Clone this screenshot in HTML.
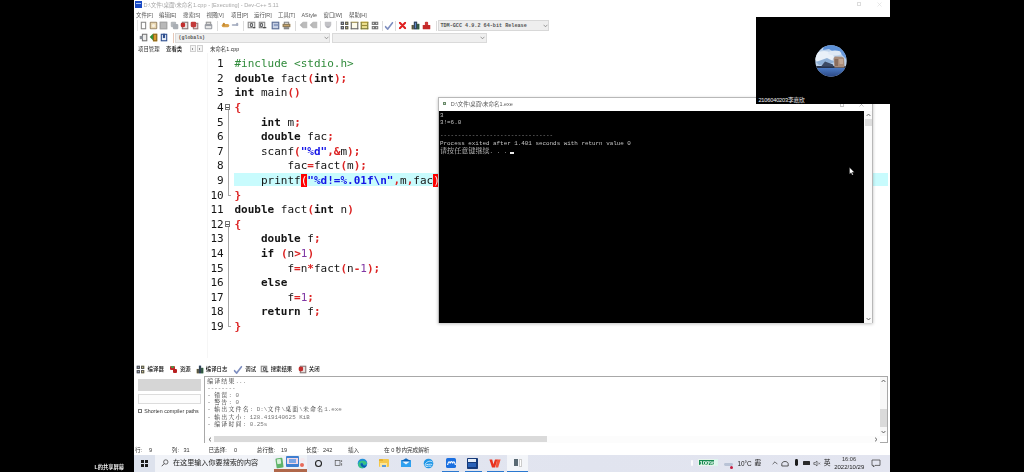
<!DOCTYPE html>
<html lang="zh-CN">
<head>
<meta charset="utf-8">
<title>Dev-C++ screen share</title>
<style>
*{margin:0;padding:0;box-sizing:border-box}
html,body{width:1024px;height:472px;overflow:hidden;background:#000}
body{position:relative;font-family:"Liberation Sans","Noto Sans CJK SC",sans-serif;color:#000}
.a{position:absolute;white-space:nowrap}
#screen{left:134px;top:0;width:756px;height:472px;background:#fff;overflow:hidden}
/* everything inside #screen is positioned in page coordinates via the wrapper below */
#w{left:-134px;top:0;width:1024px;height:472px;filter:blur(0.4px)}
.ui{font-size:5.4px;line-height:8px;color:#444}
.title{font-size:5.6px;line-height:8px;color:#a8a8a8}
.code{color:#141414;font-family:"DejaVu Sans Mono","Liberation Mono",monospace;font-size:11px;line-height:14.6px;letter-spacing:0;white-space:pre}
.ln{left:199.2px;width:24.5px;text-align:right;height:14.6px}
.cl{left:234.5px;height:14.6px}
.k{font-weight:bold}
.s{color:#dc2424;font-weight:bold}
.p{color:#2f8a3a}
.n{color:#8038a4}
.q{color:#1414e6;font-weight:bold}
.mono{font-family:"Liberation Mono","Noto Sans CJK SC",monospace}
.con{font-family:"Liberation Mono","Noto Sans CJK SC",monospace;font-size:5.9px;line-height:7.1px;color:#c4c4c4}
.cj{font-family:"Noto Serif CJK SC","Noto Sans CJK SC",serif;font-size:7.09px}
.out{font-family:"Noto Serif CJK SC","Noto Sans CJK SC",serif;font-size:5.9px;line-height:7.1px;color:#333;letter-spacing:1.2px}
.ol{font-family:"Liberation Mono",monospace;font-size:5.9px;color:#777;letter-spacing:0}
.br{background:#f00;color:#fff}
.tb{font-size:7.1px;line-height:9px;color:#222}
</style>
</head>
<body>
<div id="screen" class="a"><div id="w" class="a">

<!-- ===== title bar ===== -->
<div class="a" style="left:134.8px;top:1.2px;width:7.2px;height:7.3px;background:#1a4ac4"></div><div class="a" style="left:135.6px;top:2.9px;width:5.6px;height:1.3px;background:#a8c6f4"></div>
<div class="a title" style="left:143.5px;top:0.5px">D:\文件\桌面\未命名1.cpp - [Executing] - Dev-C++ 5.11</div>

<!-- ===== menu bar ===== -->
<div class="a ui" style="left:136px;top:10.6px;color:#555">文件[F]</div>
<div class="a ui" style="left:159px;top:10.6px;color:#555">编辑[E]</div>
<div class="a ui" style="left:183px;top:10.6px;color:#555">搜索[S]</div>
<div class="a ui" style="left:206.5px;top:10.6px;color:#555">视图[V]</div>
<div class="a ui" style="left:231px;top:10.6px;color:#555">项目[P]</div>
<div class="a ui" style="left:254px;top:10.6px;color:#555">运行[R]</div>
<div class="a ui" style="left:278px;top:10.6px;color:#555">工具[T]</div>
<div class="a ui" style="left:301.5px;top:10.6px;color:#555">AStyle</div>
<div class="a ui" style="left:323.5px;top:10.6px;color:#555">窗口[W]</div>
<div class="a ui" style="left:349px;top:10.6px;color:#555">帮助[H]</div>

<!-- TOOLBARS -->
<!-- ===== toolbars ===== -->
<div class="a" style="left:0;top:0;width:0;height:0;transform-origin:143.7px 25.4px;transform:scale(1.08)"><div class="a" style="left:141.1px;top:21.8px;width:5.0px;height:7.2px;background:#fdfdfd;border:0.8px solid #8a8a8a"></div></div>
<div class="a" style="left:0;top:0;width:0;height:0;transform-origin:153.6px 25.4px;transform:scale(1.08)"><div class="a" style="left:150.2px;top:22.3px;width:6.8px;height:6.4px;background:#e9d7b0;border:0.8px solid #a08c6c;border-radius:1px"></div><div class="a" style="left:152.0px;top:23.8px;width:3.4px;height:3.2px;background:#f7f0e0;border-radius:2px"></div></div>
<div class="a" style="left:0;top:0;width:0;height:0;transform-origin:163.7px 25.4px;transform:scale(1.08)"><div class="a" style="left:160.3px;top:21.8px;width:6.8px;height:7.0px;background:#b9b9b9;border:0.6px solid #a4a4a4"></div></div>
<div class="a" style="left:0;top:0;width:0;height:0;transform-origin:174.2px 25.4px;transform:scale(1.08)"><div class="a" style="left:170.8px;top:21.8px;width:5.0px;height:5.4px;background:#b4b8bc;border-radius:1px"></div><div class="a" style="left:172.6px;top:23.6px;width:5.0px;height:5.4px;background:#a9aeb4;border-radius:1px"></div></div>
<div class="a" style="left:0;top:0;width:0;height:0;transform-origin:184.3px 25.4px;transform:scale(1.08)"><div class="a" style="left:182.3px;top:21.8px;width:5.4px;height:7.2px;background:#e8e2e0;border:0.7px solid #8a7a7a"></div><div class="a" style="left:180.9px;top:23.2px;width:4.2px;height:4.2px;background:#c22d2d;border-radius:1.2px"></div></div>
<div class="a" style="left:0;top:0;width:0;height:0;transform-origin:194.5px 25.4px;transform:scale(1.08)"><div class="a" style="left:193.3px;top:22.8px;width:4.6px;height:6.2px;background:#e4d8d8;border:0.7px solid #9a7a7a"></div><div class="a" style="left:191.1px;top:21.8px;width:4.6px;height:5.6px;background:#c43a3a;border-radius:1.2px"></div></div>
<div class="a" style="left:0;top:0;width:0;height:0;transform-origin:208.6px 25.4px;transform:scale(1.08)"><div class="a" style="left:206.4px;top:21.8px;width:4.4px;height:3.0px;background:#e6e6e6;border:0.6px solid #999"></div><div class="a" style="left:205.2px;top:24.4px;width:6.8px;height:4.4px;background:#9c9fa6;border-radius:1px"></div><div class="a" style="left:206.2px;top:26.4px;width:4.8px;height:1.6px;background:#e8e8e8;"></div></div>
<div class="a" style="left:0;top:0;width:0;height:0;transform-origin:225.8px 25.4px;transform:scale(1.08)"><div class="a" style="left:222.4px;top:24.0px;width:6.8px;height:2.6px;background:#d9a14a;border-radius:1.4px"></div><div class="a" style="left:222.6px;top:22.8px;width:2.6px;height:3.4px;background:#c58a32;border-radius:1px"></div></div>
<div class="a" style="left:0;top:0;width:0;height:0;transform-origin:235.1px 25.4px;transform:scale(1.08)"><div class="a" style="left:231.7px;top:24.2px;width:6.8px;height:2.2px;background:#b5bccb;border-radius:1.4px"></div><div class="a" style="left:235.9px;top:23.0px;width:2.4px;height:3.0px;background:#a5adc0;border-radius:1px"></div></div>
<div class="a" style="left:0;top:0;width:0;height:0;transform-origin:251.8px 25.4px;transform:scale(1.08)"><div class="a" style="left:248.4px;top:21.8px;width:6.4px;height:6.4px;background:#f2f2f2;border:0.7px solid #8a8a8a"></div><div class="a" style="left:250.0px;top:23.4px;width:3.2px;height:3.2px;background:#dfe3ea;border:0.7px solid #666;border-radius:2px"></div><div class="a" style="left:253.0px;top:26.8px;width:2.4px;height:1.6px;background:#444;"></div></div>
<div class="a" style="left:0;top:0;width:0;height:0;transform-origin:262.0px 25.4px;transform:scale(1.08)"><div class="a" style="left:258.6px;top:21.8px;width:6.4px;height:6.4px;background:#f2f2f2;border:0.7px solid #8a8a8a"></div><div class="a" style="left:260.2px;top:23.4px;width:3.2px;height:3.2px;background:#dfe3ea;border:0.7px solid #666;border-radius:2px"></div><div class="a" style="left:263.2px;top:26.8px;width:2.4px;height:1.6px;background:#444;"></div></div>
<div class="a" style="left:0;top:0;width:0;height:0;transform-origin:275.8px 25.4px;transform:scale(1.08)"><div class="a" style="left:272.4px;top:21.8px;width:6.8px;height:7.0px;background:#c9d3e6;border:0.9px solid #5d6f96"></div><div class="a" style="left:274.0px;top:23.8px;width:3.6px;height:2.6px;background:#8fa0c4;"></div></div>
<div class="a" style="left:0;top:0;width:0;height:0;transform-origin:286.7px 25.4px;transform:scale(1.08)"><div class="a" style="left:284.3px;top:21.8px;width:4.8px;height:3.0px;background:#efefef;border:0.6px solid #888"></div><div class="a" style="left:283.3px;top:24.4px;width:6.8px;height:3.0px;background:#c9a36a;border:0.6px solid #8a7a5a"></div><div class="a" style="left:284.3px;top:26.8px;width:4.8px;height:2.2px;background:#ededed;border:0.6px solid #888"></div></div>
<div class="a" style="left:0;top:0;width:0;height:0;transform-origin:303.9px 25.4px;transform:scale(1.08)"><div class="a" style="left:302.5px;top:22.4px;width:4.8px;height:6.0px;background:#bcbcbc;"></div><div class="a" style="left:299.9px;top:22.4px;width:0;height:0;border-right:3px solid #b4b4b4;border-top:3px solid transparent;border-bottom:3px solid transparent"></div></div>
<div class="a" style="left:0;top:0;width:0;height:0;transform-origin:314.0px 25.4px;transform:scale(1.08)"><div class="a" style="left:312.6px;top:22.4px;width:4.8px;height:6.0px;background:#bcbcbc;"></div><div class="a" style="left:310.0px;top:22.4px;width:0;height:0;border-right:3px solid #b4b4b4;border-top:3px solid transparent;border-bottom:3px solid transparent"></div></div>
<div class="a" style="left:0;top:0;width:0;height:0;transform-origin:328.0px 25.4px;transform:scale(1.08)"><div class="a" style="left:324.6px;top:22.2px;width:6.8px;height:4.6px;background:#c2c2c6;border-radius:0 0 2px 2px"></div><div class="a" style="left:326.0px;top:26.4px;width:4.0px;height:1.8px;background:#b4b4ba;border-radius:0 0 2px 2px"></div></div>
<div class="a" style="left:0;top:0;width:0;height:0;transform-origin:344.2px 25.4px;transform:scale(1.08)"><div class="a" style="left:340.8px;top:21.8px;width:3.0px;height:3.3px;background:#a9b8dc;border:0.55px solid #555"></div><div class="a" style="left:344.6px;top:21.8px;width:3.0px;height:3.3px;background:#e6dc8a;border:0.55px solid #555"></div><div class="a" style="left:340.8px;top:25.7px;width:3.0px;height:3.3px;background:#a9b8dc;border:0.55px solid #555"></div><div class="a" style="left:344.6px;top:25.7px;width:3.0px;height:3.3px;background:#e6dc8a;border:0.55px solid #555"></div></div>
<div class="a" style="left:0;top:0;width:0;height:0;transform-origin:354.2px 25.4px;transform:scale(1.08)"><div class="a" style="left:350.8px;top:22.2px;width:6.8px;height:6.4px;background:#fdfae8;border:0.7px solid #666;border-top:1.4px solid #9a8a4a"></div></div>
<div class="a" style="left:0;top:0;width:0;height:0;transform-origin:364.5px 25.4px;transform:scale(1.08)"><div class="a" style="left:361.1px;top:22.2px;width:6.8px;height:6.4px;background:#ece08e;border:0.7px solid #77773a;border-top:1.5px solid #a8922a"></div><div class="a" style="left:362.3px;top:24.8px;width:4.4px;height:1.0px;background:#9a8a3a;"></div></div>
<div class="a" style="left:0;top:0;width:0;height:0;transform-origin:375.0px 25.4px;transform:scale(1.08)"><div class="a" style="left:371.6px;top:21.8px;width:3.0px;height:3.3px;background:#f4f4f4;border:0.6px solid #777"></div><div class="a" style="left:375.4px;top:21.8px;width:3.0px;height:3.3px;background:#f4f4f4;border:0.6px solid #777"></div><div class="a" style="left:371.6px;top:25.7px;width:3.0px;height:3.3px;background:#f4f4f4;border:0.6px solid #777"></div><div class="a" style="left:375.4px;top:25.7px;width:3.0px;height:3.3px;background:#f4f4f4;border:0.6px solid #777"></div></div>
<div class="a" style="left:0;top:0;width:0;height:0;transform-origin:388.7px 25.4px;transform:scale(1.08)"><svg class="a" style="left:384.9px;top:21.6px" width="8" height="8" viewBox="0 0 8 8"><path d="M0.6 4.6 L2.8 6.8 L7.4 0.8" fill="none" stroke="#7f8fc0" stroke-width="1.5" stroke-linecap="round" stroke-linejoin="round"/></svg></div>
<div class="a" style="left:0;top:0;width:0;height:0;transform-origin:402.3px 25.4px;transform:scale(1.08)"><svg class="a" style="left:398.9px;top:22.0px" width="7" height="7" viewBox="0 0 7 7"><path d="M1 1 L6 6 M6 1 L1 6" fill="none" stroke="#e02020" stroke-width="1.9" stroke-linecap="round"/></svg></div>
<div class="a" style="left:0;top:0;width:0;height:0;transform-origin:415.6px 25.4px;transform:scale(1.08)"><div class="a" style="left:412.2px;top:25.2px;width:2.2px;height:3.6px;background:#d4b04a;border:0.5px solid #554"></div><div class="a" style="left:414.4px;top:22.2px;width:2.4px;height:6.6px;background:#5d86c8;border:0.5px solid #345"></div><div class="a" style="left:416.8px;top:24.0px;width:2.2px;height:4.8px;background:#57a85a;border:0.5px solid #354"></div></div>
<div class="a" style="left:0;top:0;width:0;height:0;transform-origin:426.5px 25.4px;transform:scale(1.08)"><div class="a" style="left:423.1px;top:24.8px;width:6.8px;height:4.0px;background:#c42828;border-radius:0.6px"></div><div class="a" style="left:424.9px;top:22.4px;width:3.4px;height:3.0px;background:#cc3a3a;border-radius:1px 1px 0 0"></div></div>
<div class="a" style="left:217.0px;top:20.5px;width:0.6px;height:10.0px;background:#dcdcdc;"></div>
<div class="a" style="left:243.0px;top:20.5px;width:0.6px;height:10.0px;background:#dcdcdc;"></div>
<div class="a" style="left:294.5px;top:20.5px;width:0.6px;height:10.0px;background:#dcdcdc;"></div>
<div class="a" style="left:320.0px;top:20.5px;width:0.6px;height:10.0px;background:#dcdcdc;"></div>
<div class="a" style="left:336.0px;top:20.5px;width:0.6px;height:10.0px;background:#dcdcdc;"></div>
<div class="a" style="left:382.0px;top:20.5px;width:0.6px;height:10.0px;background:#dcdcdc;"></div>
<div class="a" style="left:395.0px;top:20.5px;width:0.6px;height:10.0px;background:#dcdcdc;"></div>
<div class="a" style="left:436.0px;top:20.5px;width:0.6px;height:10.0px;background:#dcdcdc;"></div>
<div class="a" style="left:136.5px;top:20.0px;width:0.5px;height:11.0px;background:#e4e4e4;"></div>
<div class="a" style="left:438.0px;top:20.1px;width:111.3px;height:10.7px;background:#eeeeee;border:0.6px solid #d8d8d8"></div>
<div class="a mono" style="left:440.4px;top:21.9px;font-size:5.15px;line-height:8px;color:#555;font-weight:bold">TDM-GCC 4.9.2 64-bit Release</div>
<svg class="a" style="left:542.6px;top:23.8px" width="5" height="4" viewBox="0 0 5 4"><path d="M0.6 0.8 L2.5 2.8 L4.4 0.8" fill="none" stroke="#777" stroke-width="0.7"/></svg>
<div class="a" style="left:0;top:0;width:0;height:0;transform-origin:143.2px 37.2px;transform:scale(1.08)"><div class="a" style="left:141.8px;top:33.6px;width:4.8px;height:7.2px;background:#ececec;border:0.8px solid #777"></div><div class="a" style="left:139.8px;top:35.8px;width:3.6px;height:2.8px;background:#8a8f96;"></div></div>
<div class="a" style="left:0;top:0;width:0;height:0;transform-origin:153.9px 37.2px;transform:scale(1.08)"><div class="a" style="left:152.9px;top:33.6px;width:4.4px;height:7.2px;background:#d99a2e;border:0.6px solid #8a6a20"></div><div class="a" style="left:149.9px;top:34.2px;width:0;height:0;border-right:3.6px solid #2f8f2f;border-top:3px solid transparent;border-bottom:3px solid transparent"></div></div>
<div class="a" style="left:0;top:0;width:0;height:0;transform-origin:164.0px 37.2px;transform:scale(1.08)"><div class="a" style="left:161.2px;top:33.6px;width:5.6px;height:7.2px;background:#e8eef8;border:1.2px solid #2f4f8f"></div><div class="a" style="left:163.0px;top:34.4px;width:2.0px;height:3.4px;background:#2f4f8f;"></div></div>
<div class="a" style="left:172.6px;top:32.5px;width:0.6px;height:10.0px;background:#e6c8b8;"></div>
<div class="a" style="left:175.0px;top:32.6px;width:155.0px;height:10.6px;background:#efefef;border:0.6px solid #dadada"></div>
<div class="a mono" style="left:178.6px;top:34.2px;font-size:4.9px;line-height:8px;color:#555;font-weight:bold">(globals)</div>
<svg class="a" style="left:324px;top:36.2px" width="5" height="4" viewBox="0 0 5 4"><path d="M0.6 0.8 L2.5 2.8 L4.4 0.8" fill="none" stroke="#777" stroke-width="0.7"/></svg>
<div class="a" style="left:331.6px;top:32.6px;width:155.0px;height:10.6px;background:#efefef;border:0.6px solid #dadada"></div>
<svg class="a" style="left:480px;top:36.2px" width="5" height="4" viewBox="0 0 5 4"><path d="M0.6 0.8 L2.5 2.8 L4.4 0.8" fill="none" stroke="#777" stroke-width="0.7"/></svg>
<div class="a ui" style="left:138.0px;top:44.8px;color:#333">项目管理</div>
<div class="a ui" style="left:166.0px;top:45.4px;color:#111;font-weight:500">查看类</div>
<div class="a" style="left:189.8px;top:45.0px;width:6.4px;height:7.4px;background:#f4f4f4;border:0.5px solid #d0d0d0"></div>
<div class="a" style="left:196.6px;top:45.0px;width:6.4px;height:7.4px;background:#f4f4f4;border:0.5px solid #d0d0d0"></div>
<div class="a" style="left:191.8px;top:47.6px;width:0;height:0;border-right:1.8px solid #333;border-top:1.3px solid transparent;border-bottom:1.3px solid transparent"></div>
<div class="a" style="left:199.2px;top:47.6px;width:0;height:0;border-left:1.8px solid #333;border-top:1.3px solid transparent;border-bottom:1.3px solid transparent"></div>
<div class="a ui" style="left:210.0px;top:44.8px;color:#333">未命名1.cpp</div>

<div class="a" style="left:206.6px;top:53px;width:0.7px;height:305px;background:#f6f6f6"></div>
<!-- EDITOR -->
<!-- ===== editor ===== -->
<div class="a" style="left:234px;top:172.6px;width:654px;height:13.7px;background:#c8fbfd"></div>
<div class="a" style="left:227.5px;top:106.9px;width:0.7px;height:88.0px;background:#a8a8a8"></div><div class="a" style="left:227.5px;top:194.9px;width:3px;height:0.7px;background:#a8a8a8"></div><div class="a" style="left:225.3px;top:104.3px;width:5.1px;height:5.6px;background:#fff;border:0.7px solid #777"></div><div class="a" style="left:226.4px;top:106.8px;width:2.9px;height:0.7px;background:#555"></div>
<div class="a" style="left:227.5px;top:223.7px;width:0.7px;height:102.6px;background:#a8a8a8"></div><div class="a" style="left:227.5px;top:326.3px;width:3px;height:0.7px;background:#a8a8a8"></div><div class="a" style="left:225.3px;top:221.1px;width:5.1px;height:5.6px;background:#fff;border:0.7px solid #777"></div><div class="a" style="left:226.4px;top:223.6px;width:2.9px;height:0.7px;background:#555"></div>
<div class="a code ln" style="top:57.2px">1</div><div class="a code cl" style="top:57.2px"><span class="p">#include &lt;stdio.h&gt;</span></div>
<div class="a code ln" style="top:71.8px">2</div><div class="a code cl" style="top:71.8px"><span class="k">double</span> fact<span class="s">(</span><span class="k">int</span><span class="s">);</span></div>
<div class="a code ln" style="top:86.4px">3</div><div class="a code cl" style="top:86.4px"><span class="k">int</span> main<span class="s">()</span></div>
<div class="a code ln" style="top:101.0px">4</div><div class="a code cl" style="top:101.0px"><span class="s">{</span></div>
<div class="a code ln" style="top:115.6px">5</div><div class="a code cl" style="top:115.6px">    <span class="k">int</span> m<span class="s">;</span></div>
<div class="a code ln" style="top:130.2px">6</div><div class="a code cl" style="top:130.2px">    <span class="k">double</span> fac<span class="s">;</span></div>
<div class="a code ln" style="top:144.8px">7</div><div class="a code cl" style="top:144.8px">    scanf<span class="s">(</span><span class="q">&quot;%d&quot;</span><span class="s">,&amp;</span>m<span class="s">);</span></div>
<div class="a code ln" style="top:159.4px">8</div><div class="a code cl" style="top:159.4px">        fac<span class="s">=</span>fact<span class="s">(</span>m<span class="s">);</span></div>
<div class="a code ln" style="top:174.0px">9</div><div class="a code cl" style="top:174.0px">    printf<span class="br">(</span><span class="q">&quot;%d!=%.01f\n&quot;</span><span class="s">,</span>m<span class="s">,</span>fac<span class="br">)</span></div>
<div class="a code ln" style="top:188.6px">10</div><div class="a code cl" style="top:188.6px"><span class="s">}</span></div>
<div class="a code ln" style="top:203.2px">11</div><div class="a code cl" style="top:203.2px"><span class="k">double</span> fact<span class="s">(</span><span class="k">int</span> n<span class="s">)</span></div>
<div class="a code ln" style="top:217.8px">12</div><div class="a code cl" style="top:217.8px"><span class="s">{</span></div>
<div class="a code ln" style="top:232.4px">13</div><div class="a code cl" style="top:232.4px">    <span class="k">double</span> f<span class="s">;</span></div>
<div class="a code ln" style="top:247.0px">14</div><div class="a code cl" style="top:247.0px">    <span class="k">if</span> <span class="s">(</span>n<span class="s">&gt;</span><span class="n">1</span><span class="s">)</span></div>
<div class="a code ln" style="top:261.6px">15</div><div class="a code cl" style="top:261.6px">        f<span class="s">=</span>n<span class="s">*</span>fact<span class="s">(</span>n<span class="s">-</span><span class="n">1</span><span class="s">);</span></div>
<div class="a code ln" style="top:276.2px">16</div><div class="a code cl" style="top:276.2px">    <span class="k">else</span></div>
<div class="a code ln" style="top:290.8px">17</div><div class="a code cl" style="top:290.8px">        f<span class="s">=</span><span class="n">1</span><span class="s">;</span></div>
<div class="a code ln" style="top:305.4px">18</div><div class="a code cl" style="top:305.4px">    <span class="k">return</span> f<span class="s">;</span></div>
<div class="a code ln" style="top:320.0px">19</div><div class="a code cl" style="top:320.0px"><span class="s">}</span></div>


<!-- CONSOLE -->
<!-- ===== console window ===== -->
<div class="a" style="left:438.4px;top:97.2px;width:434.6px;height:226.0px;background:#fff;border:0.6px solid #b8b8b8;box-shadow:0 1px 3px rgba(0,0,0,0.25)"></div>
<div class="a" style="left:439.0px;top:110.5px;width:425.2px;height:212.2px;background:#000;"></div>
<div class="a" style="left:864.2px;top:110.5px;width:8.0px;height:212.2px;background:#fafafa;"></div>
<div class="a" style="left:864.6px;top:118.8px;width:7.2px;height:7.4px;background:#dedede;"></div>
<svg class="a" style="left:865.6px;top:113.4px" width="5" height="4" viewBox="0 0 5 4"><path d="M0.6 3 L2.5 1 L4.4 3" fill="none" stroke="#555" stroke-width="0.8"/></svg>
<svg class="a" style="left:865.6px;top:317px" width="5" height="4" viewBox="0 0 5 4"><path d="M0.6 1 L2.5 3 L4.4 1" fill="none" stroke="#555" stroke-width="0.8"/></svg>
<div class="a" style="left:442.6px;top:101.6px;width:3.6px;height:3.8px;background:#cfd8d0;border:0.6px solid #6a8a6a"></div>
<div class="a ui" style="left:450.8px;top:99.8px;font-size:5.5px;color:#5a5a5a">D:\文件\桌面\未命名1.exe</div>
<div class="a" style="left:839.6px;top:103.4px;width:4.0px;height:3.6px;background:transparent;border:0.6px solid #c4c4c4"></div>
<svg class="a" style="left:859px;top:102.4px" width="5" height="5" viewBox="0 0 5 5"><path d="M0.5 0.5 L4.5 4.5 M4.5 0.5 L0.5 4.5" stroke="#999" stroke-width="0.6"/></svg>
<div class="a con" style="left:440.0px;top:111.9px;">3</div>
<div class="a con" style="left:440.0px;top:118.5px;">3!=6.0</div>
<div class="a con" style="left:440.0px;top:131.8px;color:#9a9a9a">--------------------------------</div>
<div class="a con" style="left:440.0px;top:139.8px;">Process exited after 1.401 seconds with return value 0</div>
<div class="a con" style="left:440.0px;top:146.9px;"><span class="cj">请按任意键继续</span>. . . </div>
<div class="a" style="left:510.4px;top:152.2px;width:3.6px;height:1.6px;background:#e8e8e8;"></div>

<!-- BOTTOM -->
<!-- ===== bottom panel ===== -->
<div class="a" style="left:0;top:0;width:0;height:0;transform-origin:140.8px 369.4px;transform:scale(1.08)"><div class="a" style="left:137.4px;top:365.8px;width:3.0px;height:3.3px;background:#a9b8dc;border:0.55px solid #555"></div><div class="a" style="left:141.2px;top:365.8px;width:3.0px;height:3.3px;background:#e6dc8a;border:0.55px solid #555"></div><div class="a" style="left:137.4px;top:369.7px;width:3.0px;height:3.3px;background:#a9b8dc;border:0.55px solid #555"></div><div class="a" style="left:141.2px;top:369.7px;width:3.0px;height:3.3px;background:#e6dc8a;border:0.55px solid #555"></div></div>
<div class="a ui" style="left:147.6px;top:365.4px;color:#111;font-weight:500">编译器</div>
<div class="a" style="left:170.0px;top:366.2px;width:4.6px;height:4.2px;background:#c02828;border-radius:1px"></div>
<div class="a" style="left:172.6px;top:368.8px;width:4.4px;height:4.0px;background:#b82020;border-radius:1px"></div>
<div class="a" style="left:171.2px;top:365.6px;width:2.6px;height:2.2px;background:#4a9a4a;border-radius:1px"></div>
<div class="a ui" style="left:179.9px;top:365.4px;color:#111;font-weight:500">资源</div>
<div class="a" style="left:0;top:0;width:0;height:0;transform-origin:199.9px 369.4px;transform:scale(1.08)"><div class="a" style="left:196.5px;top:369.2px;width:2.2px;height:3.6px;background:#d4b04a;border:0.5px solid #554"></div><div class="a" style="left:198.7px;top:366.2px;width:2.4px;height:6.6px;background:#5d86c8;border:0.5px solid #345"></div><div class="a" style="left:201.1px;top:368.0px;width:2.2px;height:4.8px;background:#57a85a;border:0.5px solid #354"></div></div>
<div class="a ui" style="left:205.8px;top:365.2px;color:#111;font-weight:500">编译日志</div>
<div class="a" style="left:0;top:0;width:0;height:0;transform-origin:238.0px 369.4px;transform:scale(1.08)"><svg class="a" style="left:234.2px;top:365.6px" width="8" height="8" viewBox="0 0 8 8"><path d="M0.6 4.6 L2.8 6.8 L7.4 0.8" fill="none" stroke="#7f8fc0" stroke-width="1.5" stroke-linecap="round" stroke-linejoin="round"/></svg></div>
<div class="a ui" style="left:245.3px;top:365.4px;color:#111;font-weight:500">调试</div>
<div class="a" style="left:0;top:0;width:0;height:0;transform-origin:264.3px 369.4px;transform:scale(1.08)"><div class="a" style="left:260.9px;top:365.8px;width:6.4px;height:6.4px;background:#f2f2f2;border:0.7px solid #8a8a8a"></div><div class="a" style="left:262.5px;top:367.4px;width:3.2px;height:3.2px;background:#dfe3ea;border:0.7px solid #666;border-radius:2px"></div><div class="a" style="left:265.5px;top:370.8px;width:2.4px;height:1.6px;background:#444;"></div></div>
<div class="a ui" style="left:270.7px;top:365.4px;color:#111;font-weight:500">搜索结果</div>
<div class="a" style="left:0;top:0;width:0;height:0;transform-origin:302.4px 369.4px;transform:scale(1.08)"><div class="a" style="left:300.4px;top:365.8px;width:5.4px;height:7.2px;background:#e8e2e0;border:0.7px solid #8a7a7a"></div><div class="a" style="left:299.0px;top:367.2px;width:4.2px;height:4.2px;background:#c22d2d;border-radius:1.2px"></div></div>
<div class="a ui" style="left:308.8px;top:365.4px;color:#111;font-weight:500">关闭</div>
<div class="a" style="left:137.9px;top:378.9px;width:62.9px;height:11.8px;background:#d6d6d6;"></div>
<div class="a" style="left:137.9px;top:394.2px;width:62.9px;height:9.8px;background:#fcfcfc;border:0.6px solid #dcdcdc"></div>
<div class="a" style="left:137.5px;top:408.6px;width:4.8px;height:4.8px;background:#fff;border:0.6px solid #777"></div>
<div class="a ui" style="left:144.2px;top:406.8px;font-size:5.3px;color:#333">Shorten compiler paths</div>
<div class="a" style="left:204.4px;top:376.2px;width:683.2px;height:67.0px;background:#fff;border:0.6px solid #a8a8a8"></div>
<div class="a out" style="left:207.2px;top:377.0px;">编译结果<span class="ol">...</span></div>
<div class="a out" style="left:207.2px;top:384.1px;"><span class="ol">--------</span></div>
<div class="a out" style="left:207.2px;top:391.2px;"><span class="ol">- </span>错误<span class="ol">: 0</span></div>
<div class="a out" style="left:207.2px;top:398.3px;"><span class="ol">- </span>警告<span class="ol">: 0</span></div>
<div class="a out" style="left:207.2px;top:405.4px;"><span class="ol">- </span>输出文件名<span class="ol">: D:\</span>文件<span class="ol">\</span>桌面<span class="ol">\</span>未命名<span class="ol">1.exe</span></div>
<div class="a out" style="left:207.2px;top:412.5px;"><span class="ol">- </span>输出大小<span class="ol">: 128.419140625 KiB</span></div>
<div class="a out" style="left:207.2px;top:419.6px;"><span class="ol">- </span>编译时间<span class="ol">: 0.25s</span></div>
<div class="a" style="left:205.0px;top:436.2px;width:675.0px;height:6.4px;background:#fcfcfc;"></div>
<div class="a" style="left:214.0px;top:436.4px;width:332.5px;height:5.8px;background:#dadada;"></div>
<svg class="a" style="left:207.6px;top:437px" width="4" height="5" viewBox="0 0 4 5"><path d="M3 0.6 L1 2.5 L3 4.4" fill="none" stroke="#444" stroke-width="0.8"/></svg>
<svg class="a" style="left:874.4px;top:436.8px" width="4" height="5" viewBox="0 0 4 5"><path d="M1 0.6 L3 2.5 L1 4.4" fill="none" stroke="#444" stroke-width="0.8"/></svg>
<div class="a" style="left:880.0px;top:376.8px;width:7.0px;height:59.4px;background:#f8f8f8;"></div>
<div class="a" style="left:880.4px;top:408.7px;width:6.2px;height:18.8px;background:#dadada;"></div>
<svg class="a" style="left:881px;top:378.8px" width="5" height="4" viewBox="0 0 5 4"><path d="M0.6 3 L2.5 1 L4.4 3" fill="none" stroke="#444" stroke-width="0.8"/></svg>
<svg class="a" style="left:881px;top:429.6px" width="5" height="4" viewBox="0 0 5 4"><path d="M0.6 1 L2.5 3 L4.4 1" fill="none" stroke="#444" stroke-width="0.8"/></svg>
<div class="a ui" style="left:135.0px;top:446.0px;color:#333;font-size:5.6px">行:</div>
<div class="a ui" style="left:149.0px;top:446.0px;color:#333;font-size:5.6px">9</div>
<div class="a ui" style="left:171.8px;top:446.0px;color:#333;font-size:5.6px">列:</div>
<div class="a ui" style="left:183.5px;top:446.0px;color:#333;font-size:5.6px">31</div>
<div class="a ui" style="left:208.5px;top:446.0px;color:#333;font-size:5.6px">已选择:</div>
<div class="a ui" style="left:234.0px;top:446.0px;color:#333;font-size:5.6px">0</div>
<div class="a ui" style="left:256.8px;top:446.0px;color:#333;font-size:5.6px">总行数:</div>
<div class="a ui" style="left:281.0px;top:446.0px;color:#333;font-size:5.6px">19</div>
<div class="a ui" style="left:306.0px;top:446.0px;color:#333;font-size:5.6px">长度:</div>
<div class="a ui" style="left:323.0px;top:446.0px;color:#333;font-size:5.6px">242</div>
<div class="a ui" style="left:348.0px;top:446.0px;color:#333;font-size:5.6px">插入</div>
<div class="a ui" style="left:384.0px;top:446.0px;color:#333;font-size:5.6px">在 0 秒内完成解析</div>

<!-- TASKBAR -->
<!-- ===== taskbar ===== -->
<div class="a" style="left:134.0px;top:454.6px;width:756.0px;height:17.4px;background:linear-gradient(90deg,#e4e8f2,#e1e4ef 60%,#e3e5f0);"></div>
<div class="a" style="left:134.0px;top:454.6px;width:21.4px;height:17.4px;background:#dde2ed;"></div>
<div class="a" style="left:141.2px;top:460.0px;width:3.2px;height:3.2px;background:#1a1a1a;"></div>
<div class="a" style="left:144.8px;top:460.0px;width:3.2px;height:3.2px;background:#1a1a1a;"></div>
<div class="a" style="left:141.2px;top:463.6px;width:3.2px;height:3.2px;background:#1a1a1a;"></div>
<div class="a" style="left:144.8px;top:463.6px;width:3.2px;height:3.2px;background:#1a1a1a;"></div>
<div class="a" style="left:155.4px;top:454.6px;width:118.0px;height:17.4px;background:#f1f3f8;"></div>
<svg class="a" style="left:160.6px;top:459.4px" width="8" height="8" viewBox="0 0 8 8"><circle cx="4.8" cy="3" r="2.2" fill="none" stroke="#333" stroke-width="0.7"/><path d="M3.2 4.6 L0.8 7.2" stroke="#333" stroke-width="0.8"/></svg>
<div class="a tb" style="left:173.0px;top:458.6px;">在这里输入你要搜索的内容</div>
<div class="a" style="left:273.4px;top:454.6px;width:34.0px;height:17.4px;background:#eef1f6;"></div>
<div class="a" style="left:276.0px;top:457.6px;width:7.0px;height:10.0px;background:#5fb36a;border-radius:1px;transform:rotate(-8deg)"></div>
<div class="a" style="left:277.4px;top:459.4px;width:4.0px;height:5.0px;background:#d8f0d8;border-radius:1px;transform:rotate(-8deg)"></div>
<div class="a" style="left:285.6px;top:456.2px;width:13.6px;height:10.4px;background:#3f7fd0;border-radius:1px"></div>
<div class="a" style="left:287.2px;top:457.8px;width:10.4px;height:6.6px;background:#f4d8e4;"></div>
<div class="a" style="left:288.6px;top:459.4px;width:7.4px;height:3.4px;background:#7aa6e6;"></div>
<div class="a" style="left:300.4px;top:457.6px;width:4.6px;height:4.0px;background:#f4e9ee;border-radius:2px"></div>
<div class="a" style="left:299.6px;top:463.4px;width:4.8px;height:3.6px;background:#e86a5a;border-radius:2px"></div>
<div class="a" style="left:273.6px;top:468.6px;width:33.6px;height:3.4px;background:#b0674a;"></div>
<svg class="a" style="left:313.6px;top:459px" width="9" height="9" viewBox="0 0 9 9"><circle cx="4.5" cy="4.5" r="3" fill="none" stroke="#222" stroke-width="1.1"/></svg>
<svg class="a" style="left:334px;top:459.4px" width="10" height="8" viewBox="0 0 10 8"><rect x="1.2" y="1.4" width="4.8" height="5" fill="none" stroke="#555" stroke-width="0.7"/><path d="M7.6 1.2 V3 M7.6 4.2 V6.6" stroke="#555" stroke-width="0.8"/></svg>
<svg class="a" style="left:357px;top:458px" width="11" height="11" viewBox="0 0 11 11"><circle cx="5.5" cy="5.5" r="4.8" fill="#1f8fd8"/><path d="M1.2 6.5 C1.5 2.5 7 1.5 9.8 4.8 C9.9 6.6 7.6 7 6 6.4 C6.6 5 4.6 4.2 3.6 5.6 C3 7.4 4.6 9.6 7.4 9.6 C4.4 11 1 9.6 1.2 6.5Z" fill="#39c481"/><path d="M3.6 5.8 C3.4 7.6 5 9.4 7.6 9.4 C8.6 9 9.4 8.2 9.8 7.2 C8.2 8 5.6 7.8 6 6.2 C5.6 5 4 4.8 3.6 5.8Z" fill="#0c5fa8"/></svg>
<div class="a" style="left:379.0px;top:459.4px;width:9.6px;height:7.2px;background:#f4c84a;border-radius:1px"></div>
<div class="a" style="left:379.0px;top:458.6px;width:4.4px;height:2.0px;background:#e4b030;border-radius:1px 1px 0 0"></div>
<div class="a" style="left:380.4px;top:463.0px;width:6.8px;height:3.6px;background:#fbe59a;"></div>
<div class="a" style="left:381.8px;top:465.0px;width:4.0px;height:2.0px;background:#5a9ad8;"></div>
<div class="a" style="left:401.4px;top:459.8px;width:10.0px;height:7.0px;background:#1f8fe0;border-radius:0.8px"></div>
<svg class="a" style="left:401.4px;top:457.6px" width="10" height="9" viewBox="0 0 10 9"><path d="M0 3.2 L5 0.2 L10 3.2 L5 6.6Z" fill="#0c68c0"/><path d="M1.4 3.4 H8.6 V5 L5 7.4 L1.4 5Z" fill="#e8f4ff"/><path d="M0 2.6 L5 6.6 L10 2.6 V9 H0Z" fill="#2ea0f0"/></svg>
<svg class="a" style="left:423.4px;top:458.2px" width="11" height="11" viewBox="0 0 11 11"><circle cx="5.5" cy="5.5" r="4.8" fill="#1e96e6"/><path d="M2 6.6 C3.6 3 7.6 2.6 9.4 4 M1.8 7.4 C4 6.2 7.4 6 9.2 6.4 M2.6 8.6 C4.6 8 6.6 8 8.4 8.2" stroke="#dff1ff" stroke-width="0.9" fill="none"/></svg>
<div class="a" style="left:446.0px;top:458.2px;width:10.4px;height:10.2px;background:#1a6fe0;border-radius:1.6px"></div>
<svg class="a" style="left:447px;top:460.4px" width="9" height="6" viewBox="0 0 9 6"><path d="M0.6 5 C1.4 1 2.6 1 3.2 3.4 C3.8 1 5 1 5.6 3.4 C6.2 1 7.6 1 8.4 5" stroke="#fff" stroke-width="1.2" fill="none"/></svg>
<div class="a" style="left:467.0px;top:458.0px;width:10.6px;height:10.6px;background:#163a7a;border-radius:0.8px"></div>
<div class="a" style="left:468.4px;top:459.2px;width:7.8px;height:3.2px;background:#e6eef8;"></div>
<div class="a" style="left:468.4px;top:462.8px;width:7.8px;height:4.4px;background:#2a62b8;"></div>
<svg class="a" style="left:489.4px;top:459px" width="12" height="9" viewBox="0 0 12 9"><path d="M0.4 0.6 H3.2 L4.4 5.2 L6 0.6 H8.4 L6 8.4 H3Z" fill="#e8321e"/><path d="M8 0.6 H11.6 L9.2 8.4 H6.6Z" fill="#f2543a"/></svg>
<div class="a" style="left:507.0px;top:454.6px;width:20.8px;height:17.4px;background:#f3f5f9;"></div>
<div class="a" style="left:513.6px;top:459.4px;width:4.4px;height:6.6px;background:#5a6a74;"></div>
<div class="a" style="left:518.8px;top:458.6px;width:3.0px;height:8.4px;background:#fff;border:0.5px solid #ccc"></div>
<div class="a" style="left:442.0px;top:470.6px;width:17.0px;height:1.4px;background:#2a78d0;"></div>
<div class="a" style="left:464.5px;top:470.6px;width:17.5px;height:1.4px;background:#2a78d0;"></div>
<div class="a" style="left:487.0px;top:470.6px;width:16.5px;height:1.4px;background:#2a78d0;"></div>
<div class="a" style="left:507.0px;top:470.6px;width:20.8px;height:1.4px;background:#2a78d0;"></div>
<div class="a" style="left:690.6px;top:459.6px;width:2.6px;height:6.6px;background:#fbfbfd;border-radius:1px"></div>
<div class="a" style="left:698.0px;top:458.9px;width:16.8px;height:7.4px;background:#178a50;border:0.6px solid #e8f4ec"></div>
<div class="a" style="left:714.4px;top:459.4px;width:3.2px;height:6.6px;background:#dff6ee;"></div>
<div class="a ui" style="left:699.6px;top:458.7px;font-size:6.1px;line-height:8px;color:#f4fff8;letter-spacing:-0.2px;font-weight:bold">100%</div>
<div class="a" style="left:724.0px;top:463.2px;width:8.6px;height:2.6px;background:#b9c3d6;border-radius:1.4px"></div>
<div class="a" style="left:730.2px;top:466.0px;width:2.6px;height:2.6px;background:#c41c40;border-radius:2px"></div>
<div class="a tb" style="left:737.4px;top:458.6px;font-size:6.4px">10°C</div>
<div class="a tb" style="left:754.4px;top:458.4px;font-size:6.6px">霾</div>
<svg class="a" style="left:772px;top:461px" width="6" height="4" viewBox="0 0 6 4"><path d="M0.6 3.2 L3 0.8 L5.4 3.2" fill="none" stroke="#333" stroke-width="0.7"/></svg>
<svg class="a" style="left:781.4px;top:459.6px" width="8" height="7" viewBox="0 0 8 7"><path d="M0.8 6 V3.6 C1.4 0.8 6.6 0.8 7.2 3.6 V6 Z" fill="none" stroke="#333" stroke-width="0.8"/></svg>
<div class="a" style="left:794.6px;top:458.8px;width:3.2px;height:7.6px;background:#1c1c1c;border-radius:1.4px"></div>
<div class="a" style="left:803.4px;top:460.6px;width:7.0px;height:4.6px;background:#2a2a2a;border-radius:0.6px"></div>
<svg class="a" style="left:813.4px;top:459.6px" width="8" height="7" viewBox="0 0 8 7"><path d="M0.8 2.6 H2.2 L4 1 V6 L2.2 4.4 H0.8Z" fill="none" stroke="#333" stroke-width="0.6"/><path d="M5.4 2.6 L7 4.4 M7 2.6 L5.4 4.4" stroke="#333" stroke-width="0.5"/></svg>
<div class="a tb" style="left:823.8px;top:458.4px;font-size:6.8px">英</div>
<div class="a tb" style="left:842.0px;top:455.2px;font-size:5.6px;line-height:8px;color:#333">16:06</div>
<div class="a tb" style="left:834.2px;top:463.2px;font-size:6px;line-height:8px;color:#222">2022/10/29</div>
<svg class="a" style="left:870.6px;top:458.6px" width="10" height="9" viewBox="0 0 10 9"><path d="M1 1 H9 V6.4 H4 L2.4 8 V6.4 H1Z" fill="none" stroke="#333" stroke-width="0.7"/></svg>

</div></div>

<!-- ===== video tile & overlays (outside screen) ===== -->
<!-- ===== overlays ===== -->
<div class="a" style="left:0;top:0;width:1024px;height:472px;filter:blur(0.35px)">
<div class="a" style="left:856.6px;top:2.2px;width:4.0px;height:3.6px;background:transparent;border:0.6px solid #dcdcdc"></div>
<svg class="a" style="left:877.4px;top:1.8px" width="5" height="5" viewBox="0 0 5 5"><path d="M0.5 0.5 L4.5 4.5 M4.5 0.5 L0.5 4.5" stroke="#dcdcdc" stroke-width="0.6"/></svg>
<div class="a" style="left:755.8px;top:17.2px;width:134.4px;height:86.4px;background:#000;"></div>
<svg class="a" style="left:815.4px;top:44.5px" width="32" height="32" viewBox="0 0 32 32"><defs><clipPath id="av"><circle cx="16" cy="16" r="15.7"/></clipPath><linearGradient id="wt" x1="0" y1="0" x2="0" y2="1"><stop offset="0" stop-color="#4a7ac4"/><stop offset="1" stop-color="#27407a"/></linearGradient></defs><g clip-path="url(#av)"><rect width="32" height="32" fill="#bcd2ec"/><path d="M9 0 H26 L30 7 L22 9 L14 4 L8 5Z" fill="#5c90d6"/><ellipse cx="9" cy="12" rx="10" ry="6" fill="#e9f0f8"/><ellipse cx="20" cy="8" rx="7" ry="2.6" fill="#dfe9f5"/><path d="M24 4 L31 8 L31 14 L27 10Z" fill="#6a9adc"/><path d="M1 17 L12 13 L20 17 L14 19 L4 20Z" fill="#8fb0d6"/><rect y="21" width="32" height="2.4" fill="#26324a"/><rect y="23" width="32" height="10" fill="url(#wt)"/><path d="M18.6 13 L20 11.6 L27 11.8 L29 13 L29.6 22.6 H19.4Z" fill="#a88c7a"/><path d="M19.6 14 H23 V21 H20Z" fill="#8a6e5e"/><path d="M24 14 H28 V19 H24.6Z" fill="#c2a896"/><path d="M10 16.5 L18 19.5 L18.6 21.4 L6 21.4Z" fill="#3c4a64"/></g></svg>
<div class="a ui" style="left:758.4px;top:95.8px;font-size:5.6px;line-height:8px;color:#f4f4f4;letter-spacing:-0.15px">2106040203李嘉欣</div>
<svg class="a" style="left:849.1px;top:166.5px" width="6.2" height="8.9" viewBox="0 0 7 10"><path d="M0.6 0.4 V8 L2.4 6.4 L3.6 9.2 L4.8 8.6 L3.6 6 H6Z" fill="#fff" stroke="#222" stroke-width="0.4"/></svg>
<div class="a ui" style="left:94.4px;top:463.4px;font-size:5.3px;line-height:8px;color:#f0f0f0;font-weight:bold">L的共享屏幕</div>
</div>

</body>
</html>
